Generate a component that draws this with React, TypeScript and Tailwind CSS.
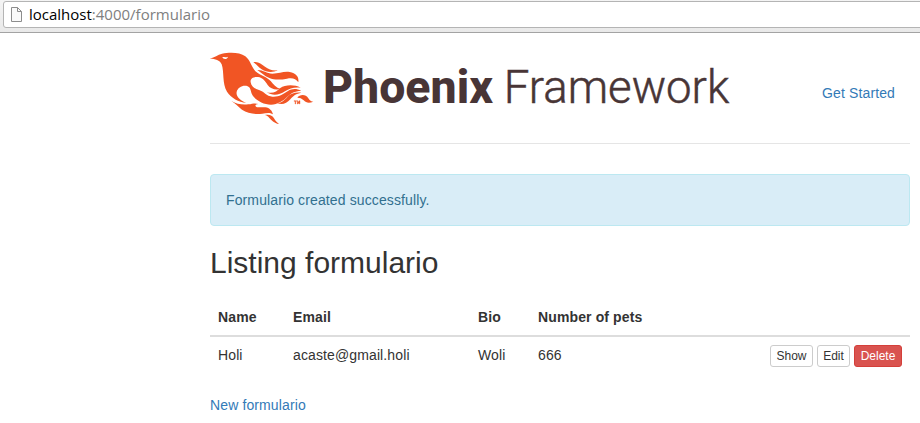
import React from "react";

function AddressBar() {
  return (
    <div className="h-[33px] overflow-hidden border-b border-[#a3a3a3] bg-gradient-to-b from-[#f4f4f4] to-[#e9e9e9] pl-[3px] pt-px">
      <div className="flex h-[27px] w-[940px] items-center rounded-[3px] border border-[#b4b4b4] bg-white pl-[7px]">
        <svg width="11" height="15" viewBox="0 0 11 15" fill="#fafafa" stroke="#8d8d8d">
          <path d="M.5.5h6l4 4v10H.5z" />
          <path d="M6.500.5v4h4" fill="none" />
        </svg>
        <span className="relative -top-px ml-[7px] font-['Open_Sans','Noto_Sans',sans-serif] text-[15px] leading-[20px] text-[#808080]">
          <span className="text-black">localhost</span>:4000/formulario
        </span>
      </div>
    </div>
  );
}

function Logo() {
  return (
    <svg width="520" height="72" viewBox="15 24 1560 216" className="block overflow-visible">
      <g fill="#f15524">
        <path
          fillRule="evenodd"
          d="M15 41C29 37 38 29 51 26C73 21 105 21 121 34C137 46 139 68 153 80C166 91 187 96 197 108C205 118 213 128 227 132C211 136 196 131 188 120C181 108 173 98 159 96C145 94 135 101 137 112C139 125 149 132 162 135C177 139 184 154 202 155C220 157 235 147 249 138C261 131 273 130 289 137C268 139 259 144 249 154C236 167 218 179 198 179C176 179 154 166 144 153C136 143 139 128 128 124C115 119 98 127 95 141C92 156 109 167 124 174C101 171 78 159 66 140C51 117 58 80 50 58C44 44 31 42 15 41ZM52 36C54 44 67 44 69 35C63 38 58 36 52 36Z"
        />
        <path d="M145 52C160 49 168 57 180 65C191 73 203 78 218 76C202 84 184 82 170 73C160 67 155 58 145 52Z" />
        <path d="M157 75C174 74 185 86 202 86C223 86 236 78 254 81C272 84 283 95 280 112C272 101 263 98 246 101C226 105 207 105 193 99C177 92 168 83 157 75Z" />
        <path d="M185 142C204 147 216 139 226 129C240 119 268 118 287 128C267 126 254 130 240 139C223 150 204 154 185 142Z" />
        <path d="M216 174C228 175 238 166 247 156C256 146 269 141 289 143C273 146 265 152 256 163C244 177 230 181 216 174Z" />
        <path d="M277 158C283 149 302 146 310 160C314 167 319 170 325 170C313 175 303 174 296 166C290 160 285 158 277 158Z" />
        <path d="M79 168C94 177 111 180 130 178C142 177 149 173 160 177C152 178 149 181 153 185C158 189 169 185 181 187C194 189 201 197 204 208C192 201 183 205 172 206C150 209 128 205 111 194C98 185 92 175 79 168Z" />
        <path d="M179 210C193 207 202 211 207 220C211 228 216 232 222 237C207 235 199 225 193 219C189 214 185 211 179 210Z" />
        <path d="M267 167h8v2h-3v8h-2v-8h-3zM277 177v-10h2l2 5l2-5h2v10h-2v-5l-2 4l-2-4v5z" stroke="#f15524" />
      </g>
      <g fill="#483536" fontFamily="Roboto, 'Open Sans', sans-serif" fontSize="141">
        <text x="354" y="173" fontWeight="800" textLength="510" lengthAdjust="spacingAndGlyphs">Phoenix</text>
        <text x="896" y="173" fontWeight="300" textLength="677" lengthAdjust="spacingAndGlyphs" stroke="#483536" strokeWidth="1.500">Framework</text>
      </g>
    </svg>
  );
}

const button = "rounded-[3px] border text-[12px] leading-[18px] h-[22px] py-px";

export default function App() {
  return (
    <div className="h-[423px] w-[920px] overflow-hidden bg-white font-['Liberation_Sans',Arial,sans-serif] text-[14px] leading-[20px] text-[#333]">
      <AddressBar />
      <main className="ml-[210px] w-[700px] pt-5">
        <header className="flex h-[91px] justify-between border-b border-[#e5e5e5]">
          <Logo />
          <a className="mr-[15px] mt-[30px] tracking-[0.12px] text-[#337ab7]">Get Started</a>
        </header>
        <p className="mt-[30px] rounded-[4px] border border-[#bce8f1] bg-[#d9edf7] p-[15px] tracking-[0.12px] text-[#31708f]">
          Formulario created successfully.
        </p>
        <h2 className="mb-5 mt-5 text-[30px] leading-[33px]">Listing formulario</h2>
        <table className="w-full table-fixed border-collapse text-left tracking-[0.12px]">
          <colgroup>
            <col className="w-[75px]" />
            <col className="w-[185px]" />
            <col className="w-[60px]" />
            <col className="w-[130px]" />
            <col />
          </colgroup>
          <thead>
            <tr className="border-b-2 border-[#ddd]">
              <th className="p-2">Name</th>
              <th className="p-2">Email</th>
              <th className="p-2">Bio</th>
              <th className="p-2">Number of pets</th>
              <th />
            </tr>
          </thead>
          <tbody>
            <tr className="align-top">
              <td className="p-2">Holi</td>
              <td className="p-2">acaste@gmail.holi</td>
              <td className="p-2">Woli</td>
              <td className="p-2">666</td>
              <td className="p-2">
                <div className="flex justify-end gap-1 tracking-normal">
                  <button className={`${button} w-[43px] border-[#ccc] bg-white`}>Show</button>
                  <button className={`${button} w-[33px] border-[#ccc] bg-white`}>Edit</button>
                  <button className={`${button} w-[48px] border-[#d43f3a] bg-[#d9534f] text-white`}>Delete</button>
                </div>
              </td>
            </tr>
          </tbody>
        </table>
        <a className="mt-5 block tracking-[0.12px] text-[#337ab7]">New formulario</a>
      </main>
    </div>
  );
}
